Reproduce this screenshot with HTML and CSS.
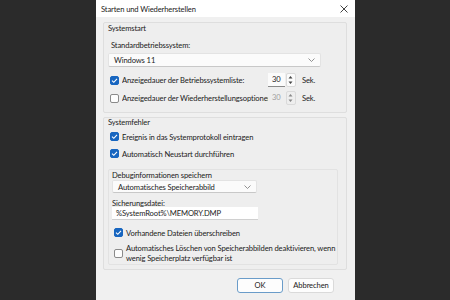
FILE: index.html
```html
<html>
    <head>
        <link rel="stylesheet" href="styles.css">
    </head>
    <body>
        <div class="window">
            <div class="titlebar">
                <span class="title">Starten und Wiederherstellen</span>
                <svg class="close" width="8" height="8" viewBox="0 0 8 8"><path d="M0.5 0.5 L7.5 7.5 M7.5 0.5 L0.5 7.5" stroke="#444" stroke-width="1"/></svg>
            </div>
            <div class="content">
                <div class="group start">
                    <div class="legend">Systemstart</div>
                    <div class="label">Standardbetriebssystem:</div>
                    <div class="combo wide">
                        <span>Windows 11</span>
                        <svg width="7" height="4" viewBox="0 0 7 4"><path d="M0.5 0.5 L3.5 3.5 L6.5 0.5" fill="none" stroke="#777" stroke-width="0.8"/></svg>
                    </div>
                    <div class="row first">
                        <span class="check on"><svg width="9" height="9" viewBox="0 0 9 9"><path d="M2 4.6 L3.8 6.3 L7 2.8" fill="none" stroke="#fff" stroke-width="1.1"/></svg></span>
                        <span class="text">Anzeigedauer der Betriebssystemliste:</span>
                        <span class="spin"><span class="num">30</span><span class="arrows"><svg width="7" height="12" viewBox="0 0 7 12"><path d="M1.5 4.5 L3.5 2 L5.5 4.5 Z M1.5 7.5 L3.5 10 L5.5 7.5 Z" fill="#444"/></svg></span></span>
                        <span class="unit">Sek.</span>
                    </div>
                    <div class="row">
                        <span class="check"></span>
                        <span class="text">Anzeigedauer der Wiederherstellungsoptionen</span>
                        <span class="spin disabled"><span class="num">30</span><span class="arrows"><svg width="7" height="12" viewBox="0 0 7 12"><path d="M1.5 4.5 L3.5 2 L5.5 4.5 Z M1.5 7.5 L3.5 10 L5.5 7.5 Z" fill="#888"/></svg></span></span>
                        <span class="unit">Sek.</span>
                    </div>
                </div>
                <div class="group fault">
                    <div class="legend">Systemfehler</div>
                    <div class="row line">
                        <span class="check on"><svg width="9" height="9" viewBox="0 0 9 9"><path d="M2 4.6 L3.8 6.3 L7 2.8" fill="none" stroke="#fff" stroke-width="1.1"/></svg></span>
                        <span class="text">Ereignis in das Systemprotokoll eintragen</span>
                    </div>
                    <div class="row line">
                        <span class="check on"><svg width="9" height="9" viewBox="0 0 9 9"><path d="M2 4.6 L3.8 6.3 L7 2.8" fill="none" stroke="#fff" stroke-width="1.1"/></svg></span>
                        <span class="text">Automatisch Neustart durchführen</span>
                    </div>
                    <div class="subgroup">
                        <div class="legend">Debuginformationen speichern</div>
                        <div class="combo small">
                            <span>Automatisches Speicherabbild</span>
                            <svg width="7" height="4" viewBox="0 0 7 4"><path d="M0.5 0.5 L3.5 3.5 L6.5 0.5" fill="none" stroke="#777" stroke-width="0.8"/></svg>
                        </div>
                        <div class="file">Sicherungsdatei:</div>
                        <div class="field">%SystemRoot%\MEMORY.DMP</div>
                        <div class="row line over">
                            <span class="check on"><svg width="9" height="9" viewBox="0 0 9 9"><path d="M2 4.6 L3.8 6.3 L7 2.8" fill="none" stroke="#fff" stroke-width="1.1"/></svg></span>
                            <span class="text">Vorhandene Dateien überschreiben</span>
                        </div>
                        <div class="row multi">
                            <span class="check"></span>
                            <span class="text">Automatisches Löschen von Speicherabbilden deaktivieren, wenn wenig Speicherplatz verfügbar ist</span>
                        </div>
                    </div>
                </div>
                <div class="buttons">
                    <span class="button default">OK</span>
                    <span class="button">Abbrechen</span>
                </div>
            </div>
        </div>
    </body>
</html>
```
FILE: styles.css
```css
body {
    margin: 0;
    background: #2b2b2b;
    font-family: Lato, "Noto Sans", sans-serif;
    font-size: 7.6px;
    letter-spacing: -0.12px;
    color: #1b1b1b;
}

.window {
    margin-left: 96px;
    width: 259px;
    height: 300px;
    background: #f0f0f0;
}

.titlebar {
    height: 17px;
    background: #ffffff;
    display: flex;
    align-items: center;
    justify-content: space-between;
    padding: 0 7px 0 5px;
}

.content {
    padding: 5px 8px 0 7px;
}

.group {
    border: 1px solid #dedede;
    border-radius: 2px;
    background: #eeeeee;
}

.start {
    padding: 0 0 5px 4px;
}

.fault {
    margin-top: 4px;
    padding: 0 8px 4px 4px;
}

.start .legend {
    line-height: 11px;
}

.label {
    margin: 5px 0 0 3px;
    line-height: 12px;
}

.combo {
    display: flex;
    align-items: center;
    justify-content: space-between;
    background: #fbfbfb;
    border: 1px solid #e3e3e3;
    border-bottom-color: #c8c8c8;
    border-radius: 2px;
    padding: 0 5px;
}

.wide {
    margin: 2px 25px 0 0;
    height: 12px;
}

.row {
    display: flex;
    align-items: center;
    height: 18px;
    padding-left: 2px;
}

.first {
    margin-top: 4px;
}

.check {
    width: 7px;
    height: 7px;
    flex: none;
    border: 1px solid #8a8a8a;
    border-radius: 2px;
    background: #fdfdfd;
    margin-right: 3px;
    display: flex;
}

.check.on {
    background: #1866c0;
    border-color: #1866c0;
}

.check.on svg {
    margin: -1px;
}

.text {
    white-space: nowrap;
}

.start .text {
    width: 146px;
    flex: none;
    overflow: hidden;
}

.spin {
    display: flex;
    align-items: stretch;
    height: 14px;
    flex: none;
}

.num {
    width: 13px;
    padding-left: 4px;
    background: #fbfbfb;
    border-bottom: 1px solid #8a8a8a;
    line-height: 13px;
}

.arrows {
    display: flex;
    align-items: center;
    width: 8px;
    margin-left: 1px;
    background: #fbfbfb;
    border: 1px solid #dadada;
    border-radius: 2px;
}

.disabled .num {
    background: transparent;
    border-bottom-color: transparent;
    color: #a0a0a0;
}

.disabled .arrows {
    background: transparent;
}

.unit {
    margin-left: 6px;
}

.fault .legend {
    line-height: 9px;
}

.fault .line {
    height: 17px;
}

.fault > .line:nth-child(2) {
    margin-top: 1px;
}

.subgroup {
    margin-top: 7px;
    border: 1px solid #e2e2e2;
    border-radius: 2px;
    padding: 0 8px 1px 3px;
}

.subgroup .legend {
    line-height: 10px;
}

.small {
    width: 133px;
    height: 11px;
}

.file {
    margin-top: 6px;
    line-height: 8px;
}

.field {
    width: 142px;
    height: 12px;
    padding-left: 4px;
    background: #ffffff;
    border-bottom: 1px solid #d0d0d0;
    line-height: 12px;
}

.over {
    margin-top: 4px;
}

.multi {
    height: auto;
    margin: 2px -7px 0 0;
}

.multi .text {
    white-space: normal;
    line-height: 10px;
}

.buttons {
    display: flex;
    justify-content: flex-end;
    gap: 5px;
    margin-top: 8px;
    padding-right: 13px;
}

.button {
    width: 44px;
    height: 13px;
    line-height: 13px;
    text-align: center;
    background: #fdfdfd;
    border: 1px solid #dadada;
    border-radius: 3px;
}

.default {
    border-color: #6a9cc9;
}
```
